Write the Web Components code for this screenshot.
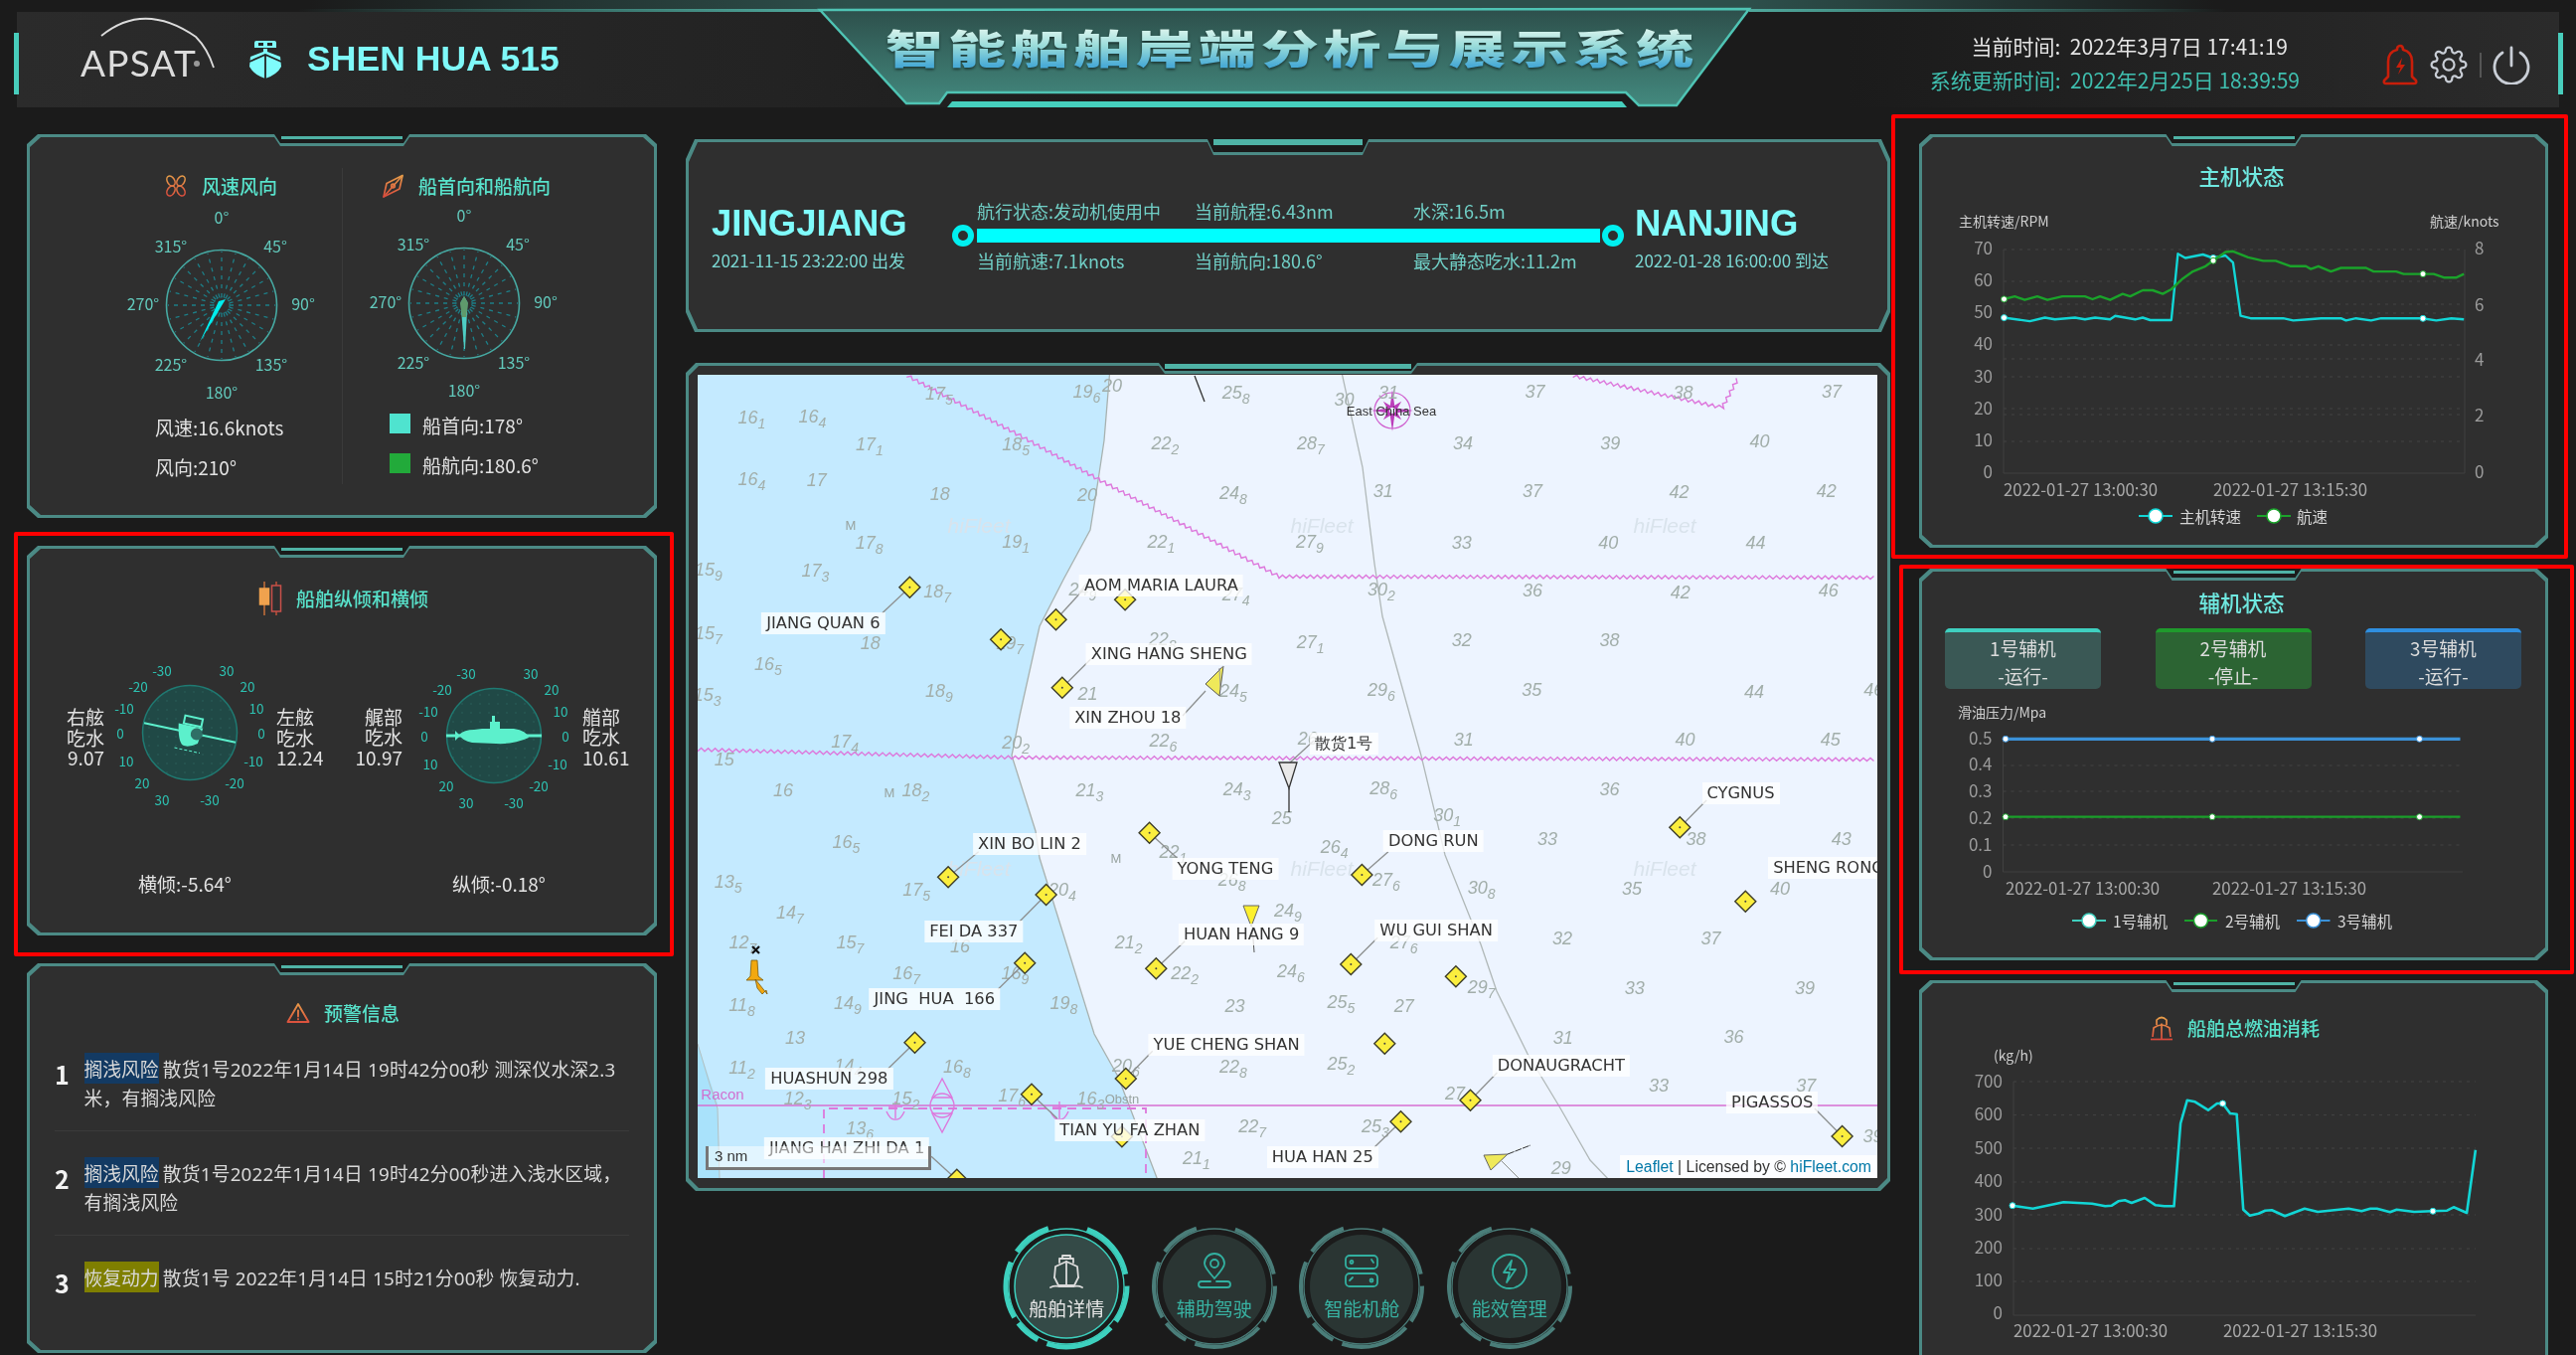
<!DOCTYPE html>
<html lang="zh">
<head>
<meta charset="utf-8">
<title>智能船舶岸端分析与展示系统</title>
<style>
  html, body { margin: 0; height: 100%; overflow: hidden; background: #1b1b1b; }
  body { font-family: "Noto Sans CJK SC", "Noto Sans", sans-serif; color: #e0e0e0; }
  .left-col, .center-col, .right-col { display: flex; flex-direction: column; }
</style>
</head>
<body>
<dash-board>
  <top-bar slot="top"></top-bar>

  <div class="left-col" slot="left" style="gap:28px">
    <hud-panel style="height:386px"><wind-panel></wind-panel></hud-panel>
    <hud-panel style="height:392px"><tilt-panel></tilt-panel></hud-panel>
    <hud-panel style="height:392px"><alert-panel></alert-panel></hud-panel>
  </div>

  <div class="center-col" slot="center" style="padding-top:5px">
    <hud-panel kind="wide" style="height:194px"><voyage-panel></voyage-panel></hud-panel>
    <hud-panel kind="map" style="height:833px;margin-top:31px"><sea-chart></sea-chart></hud-panel>
    <nav-row></nav-row>
  </div>

  <div class="right-col" slot="right" style="gap:20px">
    <hud-panel style="height:416px;margin-bottom:1px"><engine-panel></engine-panel></hud-panel>
    <hud-panel style="height:394px"><aux-panel></aux-panel></hud-panel>
    <hud-panel style="height:410px"><fuel-panel></fuel-panel></hud-panel>
  </div>

  <mark-frame style="left:14px;top:535px;width:664px;height:427px"></mark-frame>
  <mark-frame style="left:1903px;top:115px;width:681px;height:447px"></mark-frame>
  <mark-frame style="left:1911px;top:568px;width:679px;height:412px"></mark-frame>
</dash-board>

<script>
const FONT = '"Noto Sans CJK SC", "Noto Sans", sans-serif';

// 橙红渐变的标题图标
const GRAD = `<defs><linearGradient id="g" gradientUnits="userSpaceOnUse" x1="0" y1="0" x2="0" y2="24"><stop offset="0" stop-color="#e8a24a"/><stop offset="1" stop-color="#d9483c"/></linearGradient></defs>`;
const ICONS = {
  fan: `<g fill="none" stroke="url(#g)" stroke-width="1.6">
      <ellipse cx="7" cy="7" rx="3.6" ry="5.4" transform="rotate(-30 7 7)"/>
      <ellipse cx="17" cy="7" rx="3.6" ry="5.4" transform="rotate(30 17 7)"/>
      <ellipse cx="7" cy="17" rx="3.6" ry="5.4" transform="rotate(30 7 17)"/>
      <ellipse cx="17" cy="17" rx="3.6" ry="5.4" transform="rotate(-30 17 17)"/>
    </g>`,
  needle: `<g fill="none" stroke="url(#g)" stroke-width="1.7" stroke-linejoin="round">
      <path d="M22 1.5 19 15 3 23 6 9.5Z"/><path d="M22 1.5 3 23"/><circle cx="12.5" cy="12" r="1.8"/>
    </g>`,
  candle: `<g fill="none" stroke-width="1.5">
      <path d="M6 -5V29" stroke="#c9703a"/><rect x="1.5" y="2" width="9" height="16" fill="#f0a24e" stroke="#f0a24e"/>
      <path d="M18 -5V29" stroke="#c0503a"/><rect x="13.5" y="-1" width="9" height="26" fill="#2f2f2f" stroke="#c9504a"/>
    </g>`,
  warn: `<g fill="none" stroke="url(#g)" stroke-width="1.9" stroke-linejoin="round" stroke-linecap="round">
      <path d="M12 3 22.5 21H1.5Z"/><path d="M12 9.5V15.5M12 18V18.4"/>
    </g>`,
  ship: `<g fill="none" stroke="url(#g)" stroke-width="1.7" stroke-linejoin="round">
      <path d="M7 9V4Q12 -1 17 4V9"/><path d="M3 21 4 12Q12 6 20 12L21 21"/>
      <path d="M12 7.500V23"/><path d="M1 23.500H23"/>
    </g>`
};

// 画面上的红色标注框
class MarkFrame extends HTMLElement {
  constructor() {
    super();
    this.attachShadow({ mode: "open" });
    this.shadowRoot.innerHTML = `<style>
      :host { display:block; position:absolute; box-sizing:border-box; border:4px solid #f00; border-radius:2px; }
    </style>`;
  }
}

class DashBoard extends HTMLElement {
  constructor() {
    super();
    this.attachShadow({ mode: "open" });
    this.shadowRoot.innerHTML = `<style>
      :host { display:block; position:relative; width:2592px; height:1363px; overflow:hidden; background:#1b1b1b; filter:blur(.6px); }
      .cols { display:grid; grid-template-columns:634px 1212px 633px; column-gap:29px; padding:27px 0 0 27px; }
    </style>
    <slot name="top"></slot>
    <div class="cols">
      <slot name="left"></slot>
      <slot name="center"></slot>
      <slot name="right"></slot>
    </div>
    <slot></slot>`;
  }
}

class HudPanel extends HTMLElement {
  constructor() {
    super();
    this.attachShadow({ mode: "open" });
    this.shadowRoot.innerHTML = `<style>
      :host { display:block; position:relative; box-sizing:border-box; --cx:11px; --cy:10px; --nw:68px; --nd:9px; --bt:1.5px; --bh:3px; --bi:7px; }
      :host([kind=wide]) { --cx:9px; --cy:20px; --nw:81px; --nd:13px; --bt:0px; --bh:6px; --bi:6px; }
      :host([kind=map]) { --cx:10px; --cy:10px; --nw:130px; --nd:8px; --bt:1px; --bh:5px; --bi:6px; }
      .edge, .fill { position:absolute; clip-path:polygon(var(--cx) 0, calc(50% - var(--nw)) 0, calc(50% - var(--nw) + 6px) var(--nd), calc(50% + var(--nw) - 6px) var(--nd), calc(50% + var(--nw)) 0, calc(100% - var(--cx)) 0, 100% var(--cy), 100% calc(100% - var(--cy)), calc(100% - var(--cx)) 100%, var(--cx) 100%, 0 calc(100% - var(--cy)), 0 var(--cy)); }
      .edge { inset:0; background:#4b8a85; }
      .fill { inset:3px; background:#2f2f2f; }
      .bar { position:absolute; top:var(--bt); height:var(--bh); left:calc(50% - var(--nw) + var(--bi)); right:calc(50% - var(--nw) + var(--bi)); background:#4fb3a6; }
      .body { position:relative; height:100%; }
    </style>
    <div class="edge"></div><div class="fill"></div><div class="bar"></div>
    <div class="body"><slot></slot></div>`;
  }
}

class PanelTitle extends HTMLElement {
  connectedCallback() {
    const icon = this.getAttribute("icon");
    const root = this.shadowRoot || this.attachShadow({ mode: "open" });
    root.innerHTML = `<style>
      :host { display:flex; align-items:center; gap:14px; height:24px; font:500 19px/24px ${FONT}; color:#58e2cb; white-space:nowrap; }
      svg { width:24px; height:24px; flex:none; overflow:visible; }
    </style>
    <svg viewBox="0 0 24 24">${GRAD}${ICONS[icon] || ""}</svg><span><slot></slot></span>`;
  }
}

class CompassDial extends HTMLElement {
  connectedCallback() {
    const kind = this.getAttribute("kind");
    let spokes = "";
    for (let i = 0; i < 24; i++) {
      const a = i * Math.PI / 12, s = Math.sin(a), c = Math.cos(a);
      spokes += `<line x1="${(8 * s).toFixed(1)}" y1="${(8 * c).toFixed(1)}" x2="${(54 * s).toFixed(1)}" y2="${(54 * c).toFixed(1)}"/>`;
    }
    const labels = [["0°", 0, -89], ["45°", 54, -60], ["90°", 82, -2], ["135°", 50, 59], ["180°", 0, 87], ["225°", -51, 59], ["270°", -79, -2], ["315°", -51, -60]]
      .map(l => `<text x="${l[1]}" y="${l[2]}">${l[0]}</text>`).join("");
    const needle = kind === "wind"
      ? `<path d="M4 -6 -22 37 -3 -4Z" fill="#00eeee"/><path d="M4 -6 -22 37 1 -1Z" fill="#19c9d0"/>`
      : `<path d="M-3.500 -1 0 -7 3.500 -1 1 46 0 46Z" fill="#4ecdc4"/><path d="M-4 0 0 -7 4 0 2 14H-2Z" fill="#5f9a6c"/>`;
    const root = this.shadowRoot || this.attachShadow({ mode: "open" });
    root.innerHTML = `<style>
      :host { display:block; width:200px; height:200px; }
      svg { display:block; }
      text { font:16px ${FONT}; fill:#62c9bc; text-anchor:middle; dominant-baseline:central; }
    </style>
    <svg width="200" height="200" viewBox="-100 -100 200 200">
      <g stroke="#1d7f88" stroke-width="1.300" stroke-dasharray="4 5">${spokes}</g>
      <circle r="8" fill="none" stroke="#1d7f88" stroke-dasharray="2 2"/>
      <circle r="55.500" fill="none" stroke="#46a9a2" stroke-width="1.600"/>
      ${labels}${needle}
    </svg>`;
  }
}

class WindPanel extends HTMLElement {
  constructor() {
    super();
    this.attachShadow({ mode: "open" });
    this.shadowRoot.innerHTML = `<style>
      :host { display:grid; grid-template-columns:317px 317px; height:100%; position:relative; font:19px/40px ${FONT}; color:#e2e2e2; }
      :host::after { content:""; position:absolute; left:317px; top:34px; height:318px; width:1px; background:#3a3a3a; }
      .col { padding-top:40px; box-sizing:border-box; }
      panel-title { margin-bottom:8px; }
      .stats { margin-top:3px; }
      .row { display:flex; align-items:center; gap:12px; }
      .sq { width:21px; height:20px; flex:none; margin-top:-4px; }
    </style>
    <div class="col">
      <panel-title icon="fan" style="margin-left:138px">风速风向</panel-title>
      <compass-dial kind="wind" style="margin-left:96px"></compass-dial>
      <div class="stats" style="margin-left:129px">
        <div>风速:16.6knots</div>
        <div>风向:210°</div>
      </div>
    </div>
    <div class="col">
      <panel-title icon="needle" style="margin-left:39px">船首向和船航向</panel-title>
      <compass-dial kind="ship" style="margin-left:23px;margin-top:-2px"></compass-dial>
      <div class="stats" style="margin-left:48px">
        <div class="row"><span class="sq" style="background:#4fe3cf"></span>船首向:178°</div>
        <div class="row"><span class="sq" style="background:#22aa3a"></span>船航向:180.6°</div>
      </div>
    </div>`;
  }
}

class TiltGauge extends HTMLElement {
  connectedCallback() {
    const a = this.getAttribute.bind(this);
    const labels = [["-30", -28, -63], ["30", 37, -63], ["-20", -52, -47], ["20", 58, -47], ["-10", -66, -25], ["10", 67, -25], ["0", -70, 0], ["0", 72, 0], ["10", -64, 28], ["-10", 64, 28], ["20", -48, 50], ["-20", 45, 50], ["30", -28, 67], ["-30", 20, 67]]
      .map(l => `<text x="${l[1]}" y="${l[2]}">${l[0]}</text>`).join("");
    const ship = a("kind") === "roll"
      ? `<g transform="rotate(12)" fill="#5cf0cc">
           <line x1="-47" x2="47" stroke="#5cf0cc" stroke-width="2"/>
           <path d="M-13 -7H12L10 9Q2 15 -4 14Q-10 11 -13 -7Z"/>
           <path d="M-8 -16H10V-8H-8Z" fill="none" stroke="#5cf0cc" stroke-width="2"/>
           <circle cx="7" cy="0" r="6" fill="#2f6f66"/><path d="M-12 18H14" stroke="#5cf0cc" stroke-dasharray="3 2"/>
         </g>`
      : `<g fill="#5cf0cc">
           <line x1="-48" x2="48" stroke="#5cf0cc" stroke-width="3"/>
           <path d="M-35 -1Q-30 -6 -20 -6L-12 -7H-4V-14H-2V-20H1V-14H6V-7H20Q33 -5 35 2Q20 9 2 8L-22 7Q-32 5 -35 -1Z"/>
           <path d="M-39 -5 -34 0 -39 5Z"/>
         </g>`;
    const lines = s => s.split("|").map(t => `<div>${t}</div>`).join("");
    const root = this.shadowRoot || this.attachShadow({ mode: "open" });
    root.innerHTML = `<style>
      :host { display:grid; grid-template-columns:var(--lw,47px) 170px 50px; column-gap:0; font:19px/20.500px ${FONT}; color:#e2e2e2; }
      .side { align-self:center; margin-top:var(--sy,10px); white-space:nowrap; }
      .l { text-align:right; padding-right:var(--lg,1px); box-sizing:border-box; }
      .r { padding-left:var(--rg,2px); }
      svg { display:block; overflow:visible; }
      text { font:13.500px ${FONT}; fill:#2dc2b2; text-anchor:middle; dominant-baseline:central; }
      .cap { grid-column:2; justify-self:center; white-space:nowrap; line-height:28px; margin-top:var(--ct,53px); margin-left:var(--cap,0); font-size:19px; }
    </style>
    <div class="side l">${lines(a("left"))}</div>
    <svg width="170" height="170" viewBox="-85 -85 170 170">
      <defs><pattern id="d" width="9" height="9" patternUnits="userSpaceOnUse"><rect width="9" height="9" fill="#204946"/><circle cx="4" cy="4" r=".8" fill="#2a5f5a"/></pattern></defs>
      <circle r="47.500" fill="url(#d)" stroke="#1f7a72" stroke-width="1.500"/>
      ${labels}${ship}
    </svg>
    <div class="side r">${lines(a("right"))}</div>
    <div class="cap">${a("cap")}</div>`;
  }
}

class TiltPanel extends HTMLElement {
  constructor() {
    super();
    this.attachShadow({ mode: "open" });
    this.shadowRoot.innerHTML = `<style>
      :host { display:block; height:100%; padding-top:41px; box-sizing:border-box; }
      .row { display:flex; gap:29px; padding-left:32px; margin-top:38px; }
    </style>
    <panel-title icon="candle" style="margin-left:233px">船舶纵倾和横倾</panel-title>
    <div class="row">
      <tilt-gauge kind="roll" left="右舷|吃水|9.07" right="左舷|吃水|12.24" cap="横倾:-5.64°" style="--cap:-10px"></tilt-gauge>
      <tilt-gauge kind="pitch" left="艉部|吃水|10.97" right="艏部|吃水|10.61" cap="纵倾:-0.18°" style="--lw:57px;--lg:7px;--rg:4px;--sy:3px;--ct:50px;--cap:10px;margin-top:3px"></tilt-gauge>
    </div>`;
  }
}

class AlertItem extends HTMLElement {
  connectedCallback() {
    const tag = this.getAttribute("tag");
    const root = this.shadowRoot || this.attachShadow({ mode: "open" });
    root.innerHTML = `<style>
      :host { display:flex; padding:27px 0 19px; border-bottom:1px solid #3a3a3a; font:18.800px/29px ${FONT}; color:#d9d9d9; }
      :host(:last-child) { border-bottom:0; }
      b { width:29.500px; flex:none; font:700 25px/29px ${FONT}; color:#f2f2f2; padding-top:6px; }
      p { margin:0; width:548px; }
      em { font-style:normal; padding:2px 0; line-height:20px; background:${tag === "warn" ? "#7f7f00" : "#133a63"}; }
      .txt { font-family:"Noto Sans", "Noto Sans CJK SC", sans-serif; letter-spacing:.18px; line-height:20px; }
    </style>
    <b>${this.getAttribute("no")}</b>
    <p><em>${this.getAttribute("label")}</em> <span class="txt"><slot></slot></span></p>`;
  }
}

class AlertPanel extends HTMLElement {
  constructor() {
    super();
    this.attachShadow({ mode: "open" });
    this.shadowRoot.innerHTML = `<style>
      :host { display:block; padding-top:38px; box-sizing:border-box; height:100%; }
      ul { margin:2px 28px 0; padding:0; list-style:none; }
    </style>
    <panel-title icon="warn" style="margin-left:261px">预警信息</panel-title>
    <ul>
      <alert-item no="1" label="搁浅风险">散货1号2022年1月14日 19时42分00秒 测深仪水深2.3米，有搁浅风险</alert-item>
      <alert-item no="2" label="搁浅风险">散货1号2022年1月14日 19时42分00秒进入浅水区域，有搁浅风险</alert-item>
      <alert-item no="3" label="恢复动力" tag="warn">散货1号 2022年1月14日 15时21分00秒 恢复动力.</alert-item>
    </ul>`;
  }
}

class VoyagePanel extends HTMLElement {
  constructor() {
    super();
    this.attachShadow({ mode: "open" });
    this.shadowRoot.innerHTML = `<style>
      :host { display:flex; height:100%; padding:60px 0 0 26px; box-sizing:border-box; font:18px/24px ${FONT}; color:#70cfc6; }
      .port { flex:none; }
      .port b { display:block; font:700 36.500px/50px "Liberation Sans", sans-serif; color:#7ffbfb; }
      .port span { display:block; font-size:17px; line-height:26px; margin-top:-1px; color:#7ad7d2; white-space:nowrap; }
      .track { width:676px; flex:none; margin-top:0; }
      .labels { display:grid; grid-template-columns:219px 220px auto; padding-left:25px; white-space:nowrap; }
      .line { display:flex; align-items:center; height:25px; }
      .dot { width:22px; height:22px; box-sizing:border-box; border:6px solid #00f0f0; border-radius:50%; background:#2f2f2f; flex:none; }
      .bar { flex:1; height:14px; margin:0 2px 0 3px; background:#00ffff; }
    </style>
    <div class="port" style="width:242px"><b>JINGJIANG</b><span>2021-11-15 23:22:00 出发</span></div>
    <div class="track">
      <div class="labels"><span>航行状态:发动机使用中</span><span>当前航程:6.43nm</span><span>水深:16.5m</span></div>
      <div class="line"><span class="dot"></span><span class="bar"></span><span class="dot"></span></div>
      <div class="labels" style="line-height:26px"><span>当前航速:7.1knots</span><span>当前航向:180.6°</span><span>最大静态吃水:11.2m</span></div>
    </div>
    <div class="port" style="margin-left:11px"><b>NANJING</b><span>2022-01-28 16:00:00 到达</span></div>`;
  }
}

// 海图：坐标取自参考图的四个分区
const ZONES = { 6: [690, 360], 7: [1300, 360], 8: [690, 850], 9: [1300, 850] };
const zp = (z, x, y) => [ZONES[z][0] + x * .3954, ZONES[z][1] + y / 3];
const DEPTHS = {
  6: "16.1 168 180,16.4 322 177,17.1 468 262,16.4 168 365,17 333 370,18 647 412,17.8 467 558,19.1 840 555,22.1 1210 555,15.9 58 640,17.3 330 642,18.7 640 705,15.7 58 832,18 470 860,19.7 825 860,16.5 210 925,15.3 55 1018,18.9 645 1005,21 1023 1015,24.5 1393 1005,17.4 405 1158,20.2 840 1160,22.6 1215 1155,15 98 1213,16 248 1305,18.2 585 1305,21.3 1028 1305,24.3 1403 1303,25 1517 1390,16.5 408 1460,19.6 1020 103,20 1085 85,25.8 1400 105,22.2 1220 258,20 1022 415,24.8 1393 408,18.5 840 262,17.5 645 108,22.8 1213 850,24.9 1010 700,27.4 1400 715",
  7: "30 133 125,31 245 105,37 618 102,38 995 105,37 1373 102,28.7 48 257,34 435 257,39 810 257,40 1190 253,31 232 403,37 612 403,42 985 406,42 1360 403,27.9 45 555,33 432 557,40 805 557,44 1180 557,30.2 227 700,36 612 703,42 988 707,46 1365 703,27.1 47 857,32 432 853,38 808 853,29.6 227 1003,35 610 1003,44 1176 1007,46 1480 1003,31 437 1152,40 1000 1152,45 1370 1152,28.6 233 1300,36 808 1302,30.1 395 1380,33 650 1452,38 1028 1452,43 1398 1452,26.4 108 1475,26 40 1150",
  8: "13.5 108 110,17.5 587 135,20.4 958 135,14.7 265 205,12.7 145 295,15.7 418 295,21.2 1127 295,16 698 305,24.9 1532 197,16.7 562 388,16.9 838 388,22.2 1270 388,24.6 1540 380,11.8 143 483,14.9 412 477,19.8 962 478,23 1397 485,13 278 582,14.4 413 665,16.8 690 668,20.6 1120 665,22.8 1393 668,11.2 143 673,12.3 285 765,15.2 560 765,17.6 830 757,16.3 1030 765,13.6 443 855,22.7 1442 848,21.1 1300 945,22.1 1240 20,26.8 1390 105",
  9: "27.6 240 105,30.8 482 128,35 865 132,40 1242 132,32 688 282,37 1066 282,27.6 285 295,25.5 125 475,27 285 485,29.7 482 430,33 872 432,39 1305 432,31 690 582,36 1124 578,25.2 125 660,27 415 750,33 933 727,37 1308 727,25.3 212 850,29 685 975,39 1478 878"
};
// 区, 菱形x, y, 船名, 标签x, y, 引线x, y
const SHIPS = [
  [6, 570, 692, "JIANG QUAN 6", 350, 802, 500, 770],
  [6, 802, 850],
  [6, 942, 790, "AOM MARIA LAURA", 1210, 688, 1015, 695],
  [6, 1118, 730],
  [6, 958, 995, "XING HANG SHENG", 1230, 894, 1030, 910],
  [6, 668, 1567, "XIN BO LIN 2", 875, 1467, 745, 1490],
  [6, 1180, 1433, "YONG TENG", 1373, 1542, 1250, 1509],
  [7, 987, 1417, "CYGNUS", 1142, 1315, 1055, 1335],
  [7, 178, 1560, "DONG RUN", 360, 1457, 245, 1490],
  [8, 917, 150, "FEI DA 337", 733, 260, 850, 230],
  [8, 863, 356, "JING  HUA  166", 633, 466, 795, 435],
  [8, 583, 596, "HUASHUN 298", 365, 705, 515, 675],
  [8, 1197, 373, "HUAN HANG 9", 1414, 271, 1270, 290],
  [8, 1120, 705, "YUE CHENG SHAN", 1376, 603, 1188, 622],
  [8, 880, 752, "TIAN YU FA ZHAN", 1130, 862, 945, 825],
  [8, 1110, 880],
  [8, 690, 1010, "JIANG HAI ZHI DA 1", 410, 915, 625, 940],
  [9, 150, 360, "WU GUI SHAN", 367, 259, 218, 280],
  [9, 417, 397],
  [9, 236, 599],
  [9, 454, 770, "DONAUGRACHT", 685, 667, 522, 687],
  [9, 277, 835, "HUA HAN 25", 78, 943, 210, 912],
  [9, 1400, 879, "PIGASSOS", 1222, 777, 1330, 795],
  [9, 1154, 170]
];

function wavePath(pts, amp, step) {
  let d = "", flip = 1;
  for (let i = 0; i < pts.length - 1; i++) {
    const [x0, y0] = pts[i], [x1, y1] = pts[i + 1];
    const len = Math.hypot(x1 - x0, y1 - y0), n = Math.max(1, Math.round(len / step));
    const nx = -(y1 - y0) / len, ny = (x1 - x0) / len;
    for (let k = 0; k < n; k++) {
      const t = k / n;
      d += `${d ? "L" : "M"}${(x0 + (x1 - x0) * t + nx * amp * flip).toFixed(1)} ${(y0 + (y1 - y0) * t + ny * amp * flip).toFixed(1)}`;
      flip = -flip;
    }
  }
  return d;
}

class SeaChart extends HTMLElement {
  constructor() {
    super();
    this.attachShadow({ mode: "open" });
    const px = p => `left:${(p[0] - 702).toFixed(1)}px;top:${(p[1] - 377).toFixed(1)}px`;
    let depths = "";
    for (const z in DEPTHS) {
      for (const item of DEPTHS[z].split(",")) {
        const [v, x, y] = item.split(" ");
        const [a, b] = v.split(".");
        depths += `<span class="d" style="${px(zp(z, +x, +y))}">${a}${b ? `<sub>${b}</sub>` : ""}</span>`;
      }
    }
    let leaders = "", marks = "", labels = "";
    for (const s of SHIPS) {
      const [z, x, y, name, lx, ly, ex, ey] = s;
      const c = zp(z, x, y);
      marks += `<g transform="translate(${c[0].toFixed(1)} ${c[1].toFixed(1)})"><path d="M0 -10.500 10.500 0 0 10.500 -10.500 0Z" fill="#fbee3e" stroke="#3d3d2a" stroke-width="1.400"/><circle r="1" fill="#444"/></g>`;
      if (name) {
        const e = zp(z, ex, ey);
        leaders += `<line x1="${c[0].toFixed(1)}" y1="${c[1].toFixed(1)}" x2="${e[0].toFixed(1)}" y2="${e[1].toFixed(1)}"/>`;
        labels += `<span class="l" style="${px(zp(z, lx, ly))}">${name.replace(/ /g, "&nbsp;")}</span>`;
      }
    }
    const sr = zp(9, 1222, 68);
    labels += `<span class="l" style="left:${(sr[0] - 702 - 4).toFixed(1)}px;top:${(sr[1] - 377).toFixed(1)}px;transform:translateY(-50%)">SHENG RONG</span>`;
    labels += `<span class="l" style="${px(zp(7, 132, 1165))}">散货1号</span>`;
    labels += `<span class="l" style="${px(zp(6, 1125, 1085))}">XIN ZHOU 18</span>`;

    const shore = [[1117,370],[1111,443],[1105,483],[1097,533],[1070,583],[1046,630],[1026,720],[1018,760],[1042,836],[1046,863],[1070,940],[1101,1040],[1125,1083],[1166,1190]];
    const lane = [[1349,370],[1371,470],[1383,567],[1391,620],[1430,760],[1454,860],[1490,950],[1506,997],[1537,1060],[1569,1113],[1600,1167],[1622,1190]];
    const poly = p => p.map(q => q.join(",")).join(" ");
    const water = poly([[702,370], ...shore, [702,1190]]);
    const tags = ["hiFleet", 985, 528, "hiFleet", 1330, 528, "hiFleet", 1675, 528, "hiFleet", 985, 873, "hiFleet", 1330, 873, "hiFleet", 1675, 873];
    let marksText = "";
    for (let i = 0; i < tags.length; i += 3) marksText += `<span class="w" style="${px([tags[i + 1], tags[i + 2]])}">${tags[i]}</span>`;
    let rose = "";
    for (let i = 0; i < 8; i++) rose += `<path transform="rotate(${i * 45})" d="M-2.500 -3 0 ${i % 2 ? -13 : -21} 2.500 -3Z"/>`;

    this.shadowRoot.innerHTML = `<style>
      :host { display:block; position:absolute; left:12px; top:12px; width:1187px; height:808px; overflow:hidden; background:#edf4ff; }
      svg { position:absolute; inset:0; }
      span { position:absolute; transform:translate(-50%,-50%); white-space:nowrap; }
      .d { font:italic 18px/1 "Liberation Sans", sans-serif; color:#a2aeaa; }
      .d sub { font-size:14px; vertical-align:-5px; line-height:0; }
      .w { font:italic 21px/1 "Liberation Sans", sans-serif; color:#d9e3ec; }
      .m { font:13px/1 "Liberation Sans", sans-serif; color:#98a3a0; }
      .l { font:16.300px/22px "DejaVu Sans", sans-serif; color:#333; background:rgba(255,255,255,.78); padding:0 5px; }
      .p { font:15px/1 "Liberation Sans", sans-serif; color:#d070d0; }
      .sea { font:13px/1 "Liberation Sans", sans-serif; color:#333; }
      .scale { left:8px; bottom:8px; transform:none; box-sizing:border-box; width:227px; height:24px; border:3px solid #777; border-top:0; background:rgba(255,255,255,.5); font:15px/20px "Liberation Sans", sans-serif; color:#333; padding-left:6px; }
      .attr { right:0; bottom:0; transform:none; height:23px; background:rgba(255,255,255,.8); padding:0 6px; font:15.800px/23px "Liberation Sans", sans-serif; color:#333; }
      .attr i { font-style:normal; color:#0078a8; }
    </style>
    <svg width="1187" height="808" viewBox="702 377 1187 808">
      <polygon points="${water}" fill="#c4eaff"/>
      <path d="M702 1050 722 1110 724 1185H702Z" fill="#a9e2fb"/>
      <path d="M702 1050 714 1090 722 1115 724 1185" fill="none" stroke="#b4c0c0"/>
      <polyline points="${poly(shore)}" fill="none" stroke="#a8b2b0" stroke-width="1.300"/>
      <polyline points="${poly(lane)}" fill="none" stroke="#b0b8b8" stroke-width="1.300"/>
      <g fill="none" stroke="#dd78dc" stroke-width="1.400">
        <path d="${wavePath([[913,378],[1026,438],[1105,482],[1200,533],[1287,580],[1889,581]], 1.6, 3.5)}"/>
        <path d="${wavePath([[702,754],[1018,762],[1889,764]], 1.6, 3.5)}"/>
        <path d="${wavePath([[1583,378],[1733,410],[1750,378]], 1.6, 3.5)}"/>
        <path d="M702 1112H1889" stroke="#d66fd2" stroke-width="1.600"/>
        <path d="M829 1185V1115H1153V1185" stroke-dasharray="9 6" stroke-width="1.800"/>
        <circle cx="948" cy="1112" r="12"/>
        <path d="M948 1085 938 1104H958ZM948 1139 938 1120H958Z"/>
        <path d="M901 1108V1125M894 1113H908M892 1118Q896 1127 901 1126Q906 1127 910 1118"/>
        <path d="M1066 1108V1125M1059 1113H1073M1057 1118Q1061 1127 1066 1126Q1071 1127 1075 1118"/>
      </g>
      <g transform="translate(1401 413)" fill="#bb3fbb">
        <circle r="18" fill="none" stroke="#cf5fcf" stroke-width="1.200"/>${rose}
      </g>
    </svg>
    ${depths}${marksText}
    <span class="m" style="${px([856, 528])}">M</span>
    <span class="m" style="${px([895, 797])}">M</span>
    <span class="m" style="${px([1123, 863])}">M</span>
    <span class="p" style="${px([727, 1100])}">Racon</span>
    <span class="m" style="${px([1129, 1105])}">Obstn</span>
    <span class="sea" style="${px([1400, 413])}">East China Sea</span>
    <svg width="1187" height="808" viewBox="702 377 1187 808">
      <g stroke="#8c8f8f" stroke-width="1.300">${leaders}
        <line x1="1213" y1="695" x2="1190" y2="720"/><line x1="1297" y1="768" x2="1322" y2="745"/>
      </g>
      ${marks}
      <path d="M1202 378 1212 404" stroke="#333" stroke-width="1.300"/>
      <path d="M1231 670 1213 688 1227 700Z" fill="#efe95a" stroke="#555"/><path d="M1227 672 1228 694M1231 670 1226 674" stroke="#999"/>
      <path d="M1287 767H1305L1297 793Z" fill="#e9e9e9" stroke="#333" stroke-width="1.300"/><path d="M1297 793V817" stroke="#333" stroke-width="1.300"/>
      <path d="M1251 911H1267L1259 932Z" fill="#fdf02e" stroke="#666"/><path d="M1260 932 1262 958" stroke="#555"/>
      <path d="M1493 1162 1517 1161 1500 1177Z" fill="#efe95a" stroke="#666"/><path d="M1517 1161 1540 1152" stroke="#333" stroke-dasharray="7 1"/><path d="M1511 1168 1528 1185" stroke="#8c8f8f"/>
      <g fill="#f2a80f" stroke="#7a5a10" stroke-width=".8"><path d="M756 966H762L763 982 768 986H751L755 982Z"/><path d="M760 985 772 1000 771 996 767 1000 762 994Z"/></g>
      <path d="M757 952 764 959M764 952 757 959" stroke="#111" stroke-width="2.200"/>
    </svg>
    ${labels}
    <span class="scale">3 nm</span>
    <span class="attr"><i>Leaflet</i> | Licensed by © <i>hiFleet.com</i></span>`;
  }
}

const NAV_ICONS = {
  ship: `<path d="M13 10V6H27V10M16 6V3H24V6"/><path d="M8 25 9 14 20 9 31 14 32 25"/><path d="M20 9V33"/><path d="M8 25 12 33H28L32 25"/><path d="M4 35Q8 33 12 34H28Q32 33 36 35"/>`,
  pin: `<path d="M20 26Q10 15 10 11A10 10 0 0 1 30 11Q30 15 20 26Z"/><circle cx="20" cy="11" r="4"/><path d="M16 29H7A3 3 0 0 0 7 35H33A3 3 0 0 0 33 29H22"/>`,
  rack: `<rect x="4" y="3" width="32" height="13" rx="4"/><rect x="4" y="21" width="32" height="13" rx="4"/><circle cx="10" cy="9.500" r="1.500"/><path d="M30 7 32 10"/><circle cx="30" cy="28" r="1.500"/><path d="M8 28 11 25"/>`,
  bolt: `<circle cx="20" cy="19" r="17"/><path d="M22 8 14 20H20L17 30 26 17H20Z"/>`
};

class NavDial extends HTMLElement {
  connectedCallback() {
    const on = this.hasAttribute("active");
    const ring = on ? "#3dd0be" : "#4a7d79";
    const root = this.shadowRoot || this.attachShadow({ mode: "open" });
    root.innerHTML = `<style>
      :host { display:flex; flex-direction:column; align-items:center; position:relative; width:130px; height:130px; box-sizing:border-box; padding-top:31px; font:19px/24px ${FONT}; color:${on ? "#e6e6e6" : "#38b3a3"}; }
      svg.bg { position:absolute; inset:0; }
      svg.ic { position:relative; width:40px; height:38px; fill:none; stroke:${on ? "#dcdcdc" : "#32b0a0"}; stroke-width:1.800; stroke-linejoin:round; stroke-linecap:round; }
      span { position:relative; margin-top:6px; }
    </style>
    <svg class="bg" width="130" height="130" viewBox="-65 -65 130 130">
      <circle r="52" fill="${on ? "#344a47" : "#2a3533"}" stroke="${on ? "#3dd0be" : "none"}" stroke-width="1.500"/>
      <circle r="58" fill="none" stroke="${ring}" stroke-width="1.300"/>
      <circle r="61" fill="none" stroke="${ring}" stroke-width="${on ? 5 : 4}" stroke-dasharray="62 12 38 8 70 10 26 7 58 12 40 40" transform="rotate(-70)"/>
    </svg>
    <svg class="ic" viewBox="0 0 40 38">${NAV_ICONS[this.getAttribute("icon")]}</svg>
    <span>${this.getAttribute("label")}</span>`;
  }
}

class NavRow extends HTMLElement {
  constructor() {
    super();
    this.attachShadow({ mode: "open" });
    this.shadowRoot.innerHTML = `<style>
      :host { display:flex; justify-content:center; gap:18.500px; margin-top:31px; padding-right:0; }
    </style>
    <nav-dial active icon="ship" label="船舶详情"></nav-dial>
    <nav-dial icon="pin" label="辅助驾驶"></nav-dial>
    <nav-dial icon="rack" label="智能机舱"></nav-dial>
    <nav-dial icon="bolt" label="能效管理"></nav-dial>`;
  }
}

// 折线图，配置里都用整页坐标
const zMain = p => p.map((v, i) => i % 2 ? v * .357 : 1800 + v * .505);
const zFuel = p => p.map((v, i) => i % 2 ? 970 + v / 3 : 1900 + v * .441);
const pairs = a => { const r = []; for (let i = 0; i < a.length; i += 2) r.push([a[i], a[i + 1]]); return r; };
const CHARTS = {
  engine: {
    box: [1931, 205, 633, 335], plot: [2016, 2480, 251, 476], grid: [251, 283, 306, 315, 347, 361, 379, 411, 417, 444],
    yx: 2005, yl: [["70", 248], ["60", 280], ["50", 312], ["40", 344], ["30", 377], ["20", 409], ["10", 441], ["0", 473]],
    rx: 2490, rl: [["8", 248], ["6", 305], ["4", 360], ["2", 416], ["0", 473]],
    xy: 492, xl: [["2022-01-27 13:00:30", 2016], ["2022-01-27 13:15:30", 2227]], xt: [2227],
    notes: [["主机转速/RPM", 1971, 222], ["航速/knots", 2445, 222]],
    series: [
      { color: "#12d6d6", w: 2.4, marks: [2016.5, 2227, 2438], pts: pairs(zMain([428,895,480,905,510,895,530,900,570,895,590,900,610,895,640,900,650,890,690,900,705,895,720,902,762,902,775,715,790,727,825,717,845,727,870,720,885,740,900,890,920,897,985,897,1005,903,1035,900,1060,897,1100,897,1110,903,1130,897,1160,903,1180,897,1230,897,1262,897,1290,903,1320,897,1345,900])) },
      { color: "#1aa32a", w: 2.4, marks: [2016.5, 2227, 2438], pts: pairs(zMain([428,843,450,835,470,845,495,835,515,845,545,835,590,835,605,843,620,835,640,845,665,828,680,835,705,818,725,818,745,828,762,815,785,785,805,765,830,750,850,730,870,710,885,708,915,725,945,735,970,735,1000,750,1030,750,1040,758,1055,750,1080,765,1100,755,1150,755,1165,765,1210,765,1225,772,1285,772,1305,782,1330,782,1345,772])) }
    ],
    ly: 519, legend: [[2152, 2186, "#12d6d6", "主机转速", 2193], [2271, 2305, "#1aa32a", "航速", 2311]]
  },
  aux: {
    box: [1931, 700, 633, 250], plot: [2015.5, 2478, 743, 877], grid: [770, 796, 823, 850],
    yx: 2004.5, yl: [["0.5", 741], ["0.4", 767], ["0.3", 794], ["0.2", 821], ["0.1", 848], ["0", 875]],
    xy: 893, xl: [["2022-01-27 13:00:30", 2018], ["2022-01-27 13:15:30", 2226]], xt: [],
    notes: [["滑油压力/Mpa", 1970, 716]],
    series: [
      { color: "#3b92d9", w: 3.2, marks: [2018, 2226, 2434.5], pts: [[2018, 743.3], [2475.5, 743.3]] },
      { color: "#1a9f2a", w: 2.2, marks: [2018, 2226, 2434.5], pts: [[2018, 821.7], [2475.5, 821.7]] }
    ],
    ly: 926, legend: [[2085, 2119, "#3fcfbe", "1号辅机", 2126], [2198, 2231, "#1a9f2a", "2号辅机", 2239], [2311, 2344.5, "#3b92d9", "3号辅机", 2352]]
  },
  fuel: {
    box: [1931, 1048, 633, 320], plot: [2026, 2491, 1088, 1323], grid: [1088, 1121.6, 1155, 1189, 1222, 1256, 1289],
    yx: 2015, yl: [["700", 1086], ["600", 1119], ["500", 1153], ["400", 1186], ["300", 1220], ["200", 1253], ["100", 1286], ["0", 1319]],
    xy: 1338, xl: [["2022-01-27 13:00:30", 2026], ["2022-01-27 13:15:30", 2237]], xt: [],
    notes: [["(kg/h)", 2006, 1061]],
    series: [
      { color: "#12d6d6", w: 2.6, marks: [2025, 2236.5, 2448], pts: pairs(zFuel([283,728,330,737,400,718,465,722,495,730,510,728,525,715,540,712,555,720,585,705,610,727,630,730,652,730,667,480,682,410,700,415,730,440,750,420,763,420,780,450,795,452,810,740,825,758,845,752,860,743,875,742,905,760,950,737,980,747,1050,737,1080,745,1100,737,1115,737,1145,748,1160,740,1200,747,1240,745,1275,743,1290,733,1320,750,1340,560])) }
    ]
  }
};

class TrendChart extends HTMLElement {
  connectedCallback() {
    const c = CHARTS[this.getAttribute("name")];
    const [bx, by, bw, bh] = c.box, [l, r, t, b] = c.plot;
    const yAt = (s, x) => {
      for (let i = 0; i < s.pts.length - 1; i++) {
        const [x0, y0] = s.pts[i], [x1, y1] = s.pts[i + 1];
        if (x <= x1) return y0 + (y1 - y0) * Math.max(0, x - x0) / (x1 - x0);
      }
      return s.pts[s.pts.length - 1][1];
    };
    const grid = c.grid.map(y => `<line x1="${l}" x2="${r}" y1="${y}" y2="${y}"/>`).join("");
    const yl = c.yl.map(v => `<text class="ax" text-anchor="end" x="${c.yx}" y="${v[1]}">${v[0]}</text>`).join("");
    const rl = (c.rl || []).map(v => `<text class="ax" x="${c.rx}" y="${v[1]}">${v[0]}</text>`).join("");
    const xl = c.xl.map(v => `<text class="ax x" x="${v[1]}" y="${c.xy}">${v[0]}</text>`).join("");
    const notes = c.notes.map(v => `<text class="note" x="${v[1]}" y="${v[2]}">${v[0]}</text>`).join("");
    const series = c.series.map(s => `<polyline fill="none" stroke="${s.color}" stroke-width="${s.w}" stroke-linejoin="round" points="${s.pts.map(p => p.map(n => n.toFixed(1)).join(",")).join(" ")}"/>` +
      s.marks.map(x => `<circle cx="${x}" cy="${yAt(s, x).toFixed(1)}" r="3" fill="#fff" stroke="${s.color}" stroke-width="1"/>`).join("")).join("");
    const legend = (c.legend || []).map(g => `<line x1="${g[0]}" x2="${g[1]}" y1="${c.ly}" y2="${c.ly}" stroke="${g[2]}" stroke-width="2"/>
      <circle cx="${(g[0] + g[1]) / 2}" cy="${c.ly}" r="7" fill="#fff" stroke="${g[2]}" stroke-width="1.500"/>
      <text class="lg" x="${g[4]}" y="${c.ly}">${g[3]}</text>`).join("");
    const root = this.shadowRoot || this.attachShadow({ mode: "open" });
    root.innerHTML = `<style>
      :host { display:block; }
      svg { display:block; overflow:hidden; }
      text { font-family:${FONT}; dominant-baseline:central; }
      .ax { font-size:17px; fill:#9b9b9b; }
      .x { font-size:16.800px; fill:#a8a8a8; }
      .note { font-size:14px; fill:#cfcfcf; }
      .lg { font-size:15.500px; fill:#d5d5d5; }
    </style>
    <svg width="${bw}" height="${bh}" viewBox="${bx} ${by} ${bw} ${bh}">
      <g stroke="#444" stroke-width="1" stroke-dasharray="3 5">${grid}</g>
      <path d="M${l} ${t}V${b}H${r}${c.rl ? `V${t}` : ""}" fill="none" stroke="#414141"/>
      ${yl}${rl}${xl}${notes}${series}${legend}
    </svg>`;
  }
}

class EnginePanel extends HTMLElement {
  constructor() {
    super();
    this.attachShadow({ mode: "open" });
    this.shadowRoot.innerHTML = `<style>
      :host { display:block; }
      h3 { margin:0; height:70px; box-sizing:border-box; padding-top:27px; padding-left:16px; text-align:center; font:500 21.500px/30px ${FONT}; color:#6fe8e0; }
    </style>
    <h3>主机状态</h3>
    <trend-chart name="engine"></trend-chart>`;
  }
}

class AuxCard extends HTMLElement {
  connectedCallback() {
    const root = this.shadowRoot || this.attachShadow({ mode: "open" });
    root.innerHTML = `<style>
      :host { display:block; box-sizing:border-box; width:157px; height:61px; border-top:4px solid var(--top); border-radius:5px; background:var(--bg); text-align:center; font:18.800px/28px ${FONT}; color:#dcdcdc; padding-top:2px; }
    </style>
    <div>${this.getAttribute("name")}</div><div>${this.getAttribute("state")}</div>`;
  }
}

class AuxPanel extends HTMLElement {
  constructor() {
    super();
    this.attachShadow({ mode: "open" });
    this.shadowRoot.innerHTML = `<style>
      :host { display:block; }
      h3 { margin:0; height:60px; box-sizing:border-box; padding-top:19px; padding-left:16px; text-align:center; font:500 21.500px/30px ${FONT}; color:#6fe8e0; }
      .cards { display:flex; justify-content:space-between; padding:0 27px 0 26px; height:68px; }
    </style>
    <h3>辅机状态</h3>
    <div class="cards">
      <aux-card name="1号辅机" state="-运行-" style="--top:#3fd0c0;--bg:#3a5855"></aux-card>
      <aux-card name="2号辅机" state="-停止-" style="--top:#1f9a2c;--bg:#2c6433"></aux-card>
      <aux-card name="3号辅机" state="-运行-" style="--top:#2f8fe0;--bg:#2f4a5f"></aux-card>
    </div>
    <trend-chart name="aux"></trend-chart>`;
  }
}

class FuelPanel extends HTMLElement {
  constructor() {
    super();
    this.attachShadow({ mode: "open" });
    this.shadowRoot.innerHTML = `<style>
      :host { display:block; padding-top:36px; }
    </style>
    <panel-title icon="ship" style="margin-left:232px">船舶总燃油消耗</panel-title>
    <trend-chart name="fuel" style="margin-top:2px"></trend-chart>`;
  }
}

class TopBar extends HTMLElement {
  constructor() {
    super();
    this.attachShadow({ mode: "open" });
    this.shadowRoot.innerHTML = `<style>
      :host { display:block; position:relative; height:108px; box-sizing:border-box; padding:12px 17px 0; }
      .deco { position:absolute; left:0; top:0; }
      .box { display:flex; align-items:center; height:96px; background:linear-gradient(90deg,#2b2b2b 0,#232323 30%,#1b1b1b 45%,#1b1b1b 72%,#2b2b2b 100%); }
      .left { flex:1; display:flex; align-items:center; padding-left:64px; position:relative; }
      .logo { position:relative; font:400 37px/1 Lato, sans-serif; color:#dcdcdc; letter-spacing:1.200px; width:111px; margin-top:5px; }
      .logo svg { position:absolute; left:0; top:-27px; overflow:visible; }
      .boat { width:40px; height:38px; margin-left:55px; flex:none; }
      .name { margin-left:22px; font:700 35.600px/1 "Liberation Sans", sans-serif; color:#7ff9f9; white-space:nowrap; }
      .title { width:900px; flex:none; text-align:center; margin:-26px 0 0 0; position:relative; z-index:1; }
      .title span { display:inline-block; font:900 40px/48px ${FONT}; letter-spacing:3.400px; transform:translateX(-13px) scaleX(1.45); white-space:nowrap; background:linear-gradient(180deg,#d6f2ec 15%,#96dad9 50%,#49abd6 90%); -webkit-background-clip:text; background-clip:text; color:transparent; filter:drop-shadow(0 2px 1px rgba(0,0,0,.45)); }
      .right { flex:1; display:flex; align-items:center; justify-content:flex-end; padding-right:29px; position:relative; }
      .times { display:flex; flex-direction:column; align-items:flex-end; font:21px/34px ${FONT}; margin-top:5px; white-space:nowrap; }
      .now { color:#e5e5e5; padding-right:12px; }
      .upd { color:#3fbfaf; }
      .ico { margin:10px 0 0 81px; display:flex; align-items:center; }
      .accent { position:absolute; top:33px; width:5px; height:62px; background:#48cdbc; }
    </style>
    <svg class="deco" width="2592" height="112" viewBox="0 0 2592 112">
      <defs>
        <linearGradient id="topfade" x1="0" x2="1" y1="0" y2="0"><stop offset=".12" stop-color="#2d4f4b" stop-opacity="0"/><stop offset=".33" stop-color="#2d4f4b"/><stop offset=".68" stop-color="#2d4f4b"/><stop offset=".86" stop-color="#2d4f4b" stop-opacity="0"/></linearGradient>
        <linearGradient id="lineL" x1="0" x2="1" y1="0" y2="0"><stop offset="0" stop-color="#4fc4b4" stop-opacity="0"/><stop offset="1" stop-color="#4fa89c"/></linearGradient>
        <linearGradient id="lineR" x1="0" x2="1" y1="0" y2="0"><stop offset="0" stop-color="#4fa89c"/><stop offset="1" stop-color="#4fc4b4" stop-opacity="0"/></linearGradient>
      </defs>
      <rect width="2592" height="10" fill="url(#topfade)"/>
      <rect x="300" y="9" width="525" height="3" fill="url(#lineL)"/>
      <rect x="1760" y="9" width="480" height="3" fill="url(#lineR)"/>
    </svg>
    <div class="box">
      <div class="left">
        <div class="logo">APSAT
          <svg width="140" height="60" viewBox="0 0 140 60"><path d="M21 19Q64 -16 116 20Q128 32 134 51" fill="none" stroke="#dcdcdc" stroke-width="1.800"/><circle cx="117" cy="47" r="3" fill="#999"/></svg>
        </div>
        <svg class="boat" viewBox="3 0 34 38">
          <path fill="#7ffcfc" d="M11 0H29Q31 0 31 2V7H9V2Q9 0 11 0ZM18 8H22V11L35 16 36 26Q32 34 20 38Q8 34 4 26L5 16 18 11Z"/>
          <rect x="13" y="2" width="5" height="3" fill="#232323"/><rect x="22" y="2" width="5" height="3" fill="#232323"/>
          <path d="M4 21 20 14 36 21M20 14V38" fill="none" stroke="#232323" stroke-width="1.800"/>
        </svg>
        <span class="name">SHEN HUA 515</span>
      </div>
      <div class="title"><span>智能船舶岸端分析与展示系统</span></div>
      <div class="right">
        <div class="times">
          <span class="now">当前时间:&nbsp;&nbsp;2022年3月7日 17:41:19</span>
          <span class="upd">系统更新时间:&nbsp;&nbsp;2022年2月25日 18:39:59</span>
        </div>
        <div class="ico">
          <svg width="40" height="42" viewBox="0 0 40 42" fill="none" stroke="#c81e0a" stroke-width="2.600" stroke-linejoin="round">
            <path d="M8 33V18Q8 8 17 6Q17 2 20 2Q23 2 23 6Q32 8 32 18V33L36 37Q37 40 34 40H6Q3 40 4 37Z"/>
            <path d="M22 14 16 24H20.500L18 31 25 21H20.500Z" fill="#c81e0a" stroke="none"/>
          </svg>
          <svg width="38" height="38" viewBox="0 0 24 24" fill="none" stroke="#c9ced6" stroke-width="1.400" style="margin-left:10px">
            <circle cx="12" cy="12" r="3.500"/>
            <path d="M19.400 15a1.650 1.650 0 0 0 .33 1.820l.06.06a2 2 0 0 1 0 2.830 2 2 0 0 1-2.830 0l-.06-.06a1.650 1.650 0 0 0-1.820-.33 1.650 1.650 0 0 0-1 1.510V21a2 2 0 0 1-2 2 2 2 0 0 1-2-2v-.09A1.650 1.650 0 0 0 9 19.400a1.650 1.650 0 0 0-1.820.33l-.06.06a2 2 0 0 1-2.830 0 2 2 0 0 1 0-2.830l.06-.06a1.650 1.650 0 0 0 .33-1.820 1.650 1.650 0 0 0-1.510-1H3a2 2 0 0 1-2-2 2 2 0 0 1 2-2h.09A1.650 1.650 0 0 0 4.600 9a1.650 1.650 0 0 0-.33-1.820l-.06-.06a2 2 0 0 1 0-2.830 2 2 0 0 1 2.830 0l.06.06a1.650 1.650 0 0 0 1.820.33H9a1.650 1.650 0 0 0 1-1.510V3a2 2 0 0 1 2-2 2 2 0 0 1 2 2v.09a1.650 1.650 0 0 0 1 1.510 1.650 1.650 0 0 0 1.820-.33l.06-.06a2 2 0 0 1 2.830 0 2 2 0 0 1 0 2.830l-.06.06a1.650 1.650 0 0 0-.33 1.820V9a1.650 1.650 0 0 0 1.510 1H21a2 2 0 0 1 2 2 2 2 0 0 1-2 2h-.09a1.650 1.650 0 0 0-1.510 1z"/>
          </svg>
          <span style="width:2px;height:25px;background:#555;margin:0 11px 0 12px"></span>
          <svg width="38" height="40" viewBox="0 0 38 40" fill="none" stroke="#c9ced6" stroke-width="2.800" stroke-linecap="round">
            <path d="M19 3V21"/><path d="M10 8A17 17 0 1 0 28 8"/>
          </svg>
        </div>
      </div>
    </div>
    <svg class="deco" width="2592" height="112" viewBox="0 0 2592 112">
      <defs><linearGradient id="flag2" x1="0" x2="0" y1="0" y2="1"><stop offset="0" stop-color="#2d4f4b"/><stop offset="1" stop-color="#43897e"/></linearGradient></defs>
      <polygon points="825,10 912,104 945,104 953,93 1636,93 1649,106 1687,106 1760,9" fill="url(#flag2)" stroke="#4fc4b4" stroke-width="2.500"/>
      <polygon points="953,108 958,102 1632,102 1637,108" fill="#46cfbd"/>
    </svg>
    <div class="accent" style="left:14px"></div>
    <div class="accent" style="left:2574px"></div>`;
  }
}

customElements.define("mark-frame", MarkFrame);
customElements.define("hud-panel", HudPanel);
customElements.define("panel-title", PanelTitle);
customElements.define("compass-dial", CompassDial);
customElements.define("wind-panel", WindPanel);
customElements.define("tilt-gauge", TiltGauge);
customElements.define("tilt-panel", TiltPanel);
customElements.define("alert-item", AlertItem);
customElements.define("alert-panel", AlertPanel);
customElements.define("voyage-panel", VoyagePanel);
customElements.define("sea-chart", SeaChart);
customElements.define("nav-dial", NavDial);
customElements.define("nav-row", NavRow);
customElements.define("trend-chart", TrendChart);
customElements.define("engine-panel", EnginePanel);
customElements.define("aux-card", AuxCard);
customElements.define("aux-panel", AuxPanel);
customElements.define("fuel-panel", FuelPanel);
customElements.define("top-bar", TopBar);
customElements.define("dash-board", DashBoard);
</script>
</body>
</html>
